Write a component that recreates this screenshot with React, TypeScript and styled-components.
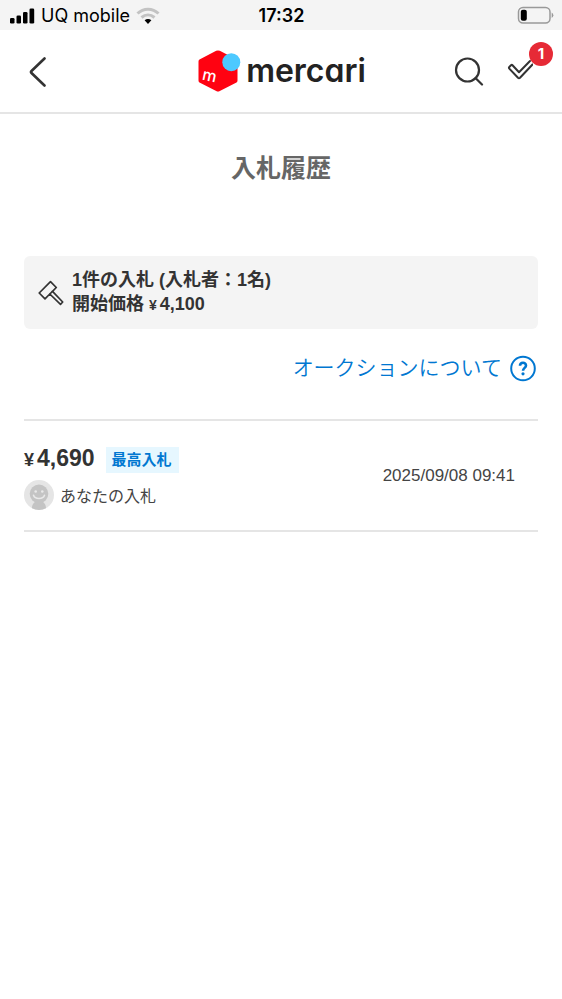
import React from "react";
import styled, { createGlobalStyle } from "styled-components";

const GlobalStyle = createGlobalStyle`
  * { box-sizing: border-box; }
  body {
    margin: 0;
    background: #fff;
    color: #333;
    font-family: "Liberation Sans", "Noto Sans CJK JP", sans-serif;
  }
  button { border: 0; padding: 0; background: none; color: inherit; cursor: pointer; }
  h1, h2, p { margin: 0; }
  svg { display: block; flex: none; }
`;

const StatusBar = styled.div`
  display: grid;
  grid-template-columns: 1fr auto 1fr;
  align-items: center;
  height: 30px;
  padding: 0 8px 0 9px;
  background: #f4f4f4;
  color: #000;
  font-family: Inter, sans-serif;
  font-size: 18px;
  line-height: 28px;
`;
const Carrier = styled.div`
  display: flex;
  align-items: center;
  gap: 6px;
  padding-top: 1px;
`;
const Clock = styled.time`
  padding-top: 2px;
  font-weight: 600;
`;
const Battery = styled.div`
  display: flex;
  justify-content: flex-end;
`;

const Header = styled.header`
  display: grid;
  grid-template-columns: 1fr auto 1fr;
  align-items: center;
  height: 84px;
  padding: 0 9px 0 11px;
  border-bottom: 2px solid #e5e5e5;
`;
const IconButton = styled.button`
  display: grid;
  place-items: center;
  width: 32px;
  height: 40px;
`;
const BackButton = styled(IconButton)`
  margin-left: 11px;
`;
const Logo = styled.a`
  display: flex;
  align-items: center;
  gap: 5px;
  color: #222;
  text-decoration: none;
`;
const Wordmark = styled.span`
  font: 600 32px/40px Inter, sans-serif;
  font-feature-settings: "cv11";
`;
const Actions = styled.div`
  display: flex;
  justify-content: flex-end;
  gap: 20px;
`;
const TodoButton = styled(IconButton)`
  position: relative;
  width: 48px;
  justify-items: start;
`;
const Count = styled.span`
  position: absolute;
  top: -9px;
  right: 0;
  width: 24px;
  height: 24px;
  border-radius: 50%;
  background: #e62a36;
  color: #fff;
  font: 700 15px/24px Inter, sans-serif;
  text-align: center;
`;

const Main = styled.main`
  padding: 34px 24px;
`;
const Title = styled.h1`
  margin-bottom: 68px;
  color: #666;
  font-size: 25px;
  line-height: 40px;
  font-weight: 700;
  text-align: center;
`;
const Summary = styled.section`
  display: flex;
  align-items: center;
  gap: 8px;
  min-height: 73px;
  padding: 12px 14px;
  border-radius: 6px;
  background: #f4f4f4;
  font-size: 18px;
  line-height: 24px;
  font-weight: 700;
`;
const Yen = styled.span<{ $size: number }>`
  display: inline-block;
  margin-right: 3px;
  font-size: ${(p) => p.$size}px;
`;
const HelpLink = styled.a`
  display: flex;
  align-items: center;
  justify-content: flex-end;
  gap: 8px;
  margin: 24px 1px 36px 0;
  color: #0077d1;
  font-size: 21px;
  line-height: 30px;
  font-weight: 350;
  text-decoration: none;
`;
const BidList = styled.ul`
  margin: 0;
  padding: 0;
  list-style: none;
  border-top: 2px solid #e5e5e5;
`;
const BidRow = styled.li`
  display: flex;
  align-items: center;
  justify-content: space-between;
  height: 111px;
  padding-right: 23px;
  border-bottom: 2px solid #e5e5e5;
`;
const Bid = styled.div`
  display: grid;
  gap: 7px;
  padding-top: 9px;
`;
const Line = styled.div`
  display: flex;
  align-items: flex-start;
`;
const Price = styled.strong`
  margin-right: 11px;
  font-size: 23px;
  line-height: 22px;
`;
const Tag = styled.span`
  padding: 0 7px 0 6px;
  background: #e6f7ff;
  color: #0077d1;
  font-size: 15px;
  line-height: 26px;
  font-weight: 700;
`;
const Bidder = styled.span`
  margin-left: 6px;
  color: #444;
  font-size: 16px;
  line-height: 34px;
`;
const BidTime = styled.time`
  color: #444;
  font-size: 17px;
  line-height: 24px;
`;

const SignalIcon = () => (
  <svg width="26" height="18" viewBox="0 0 26 18" aria-hidden="true">
    <rect x="1" y="11" width="4.500" height="5.500" rx="1.300" />
    <rect x="7.500" y="8.500" width="4.500" height="8" rx="1.300" />
    <rect x="14" y="5" width="4.500" height="11.500" rx="1.300" />
    <rect x="20.500" y="1.500" width="4.700" height="15" rx="1.300" />
  </svg>
);

const WifiIcon = () => (
  <svg width="24" height="18" viewBox="0 0 24 18" fill="none" aria-hidden="true">
    <g stroke="#c3c3c3" strokeWidth="3">
      <path d="M1.500 6.500C7.500 .8 16.500 .8 22.500 6.500" />
      <path d="M5.500 10.500C9.500 7 14.500 7 18.500 10.500" />
    </g>
    <path d="M8.600 13.300C10.600 11.500 13.400 11.500 15.400 13.300L12 17Z" fill="#000" />
  </svg>
);

const BatteryIcon = () => (
  <svg width="37" height="18" viewBox="0 0 37 18" fill="none" aria-hidden="true">
    <rect x="1.500" y="1.500" width="31.500" height="15.500" rx="4.500" stroke="#999" strokeWidth="1.500" />
    <rect x="3.800" y="3.700" width="6" height="11" rx="2" fill="#000" />
    <path d="M34.700 6.500Q38 9.200 34.700 12Z" fill="#999" />
  </svg>
);

const LogoMark = () => (
  <svg width="43" height="42" viewBox="0 0 43 42" aria-hidden="true">
    <path d="M18.200 .8Q20 0 21.800 .8L38.500 9.500Q39.500 10 39.500 11.500V30.500Q39.500 32 38.500 32.500L21.800 41Q20 42 18.200 41L1.500 32.500Q.5 32 .5 30.500V11.500Q.5 10 1.500 9.500Z" fill="#ff0211" />
    <circle cx="33.300" cy="12.200" r="9" fill="#4dc9ff" />
    <text x="3.500" y="29.500" fill="#fff" fontFamily="Inter, sans-serif" fontSize="16" fontWeight="500" transform="rotate(12 3.500 29.500)">m</text>
  </svg>
);

const BackIcon = () => (
  <svg width="20" height="32" viewBox="0 0 20 32" fill="none" stroke="#333" strokeWidth="2.600" strokeLinecap="round" strokeLinejoin="round" aria-hidden="true">
    <path d="M16.500 3.500L3.500 16Q2.500 17 3.500 18L16.500 30.500" />
  </svg>
);

const SearchIcon = () => (
  <svg width="30" height="30" viewBox="0 0 30 30" fill="none" stroke="#333" strokeWidth="2.200" strokeLinecap="round" aria-hidden="true">
    <circle cx="13.500" cy="14" r="11.500" />
    <path d="M21.500 22L28 28.500" />
  </svg>
);

const TodoIcon = () => (
  <svg width="28" height="24" viewBox="0 0 28 24" fill="none" stroke="#333" strokeWidth="2" strokeLinecap="round" strokeLinejoin="round" aria-hidden="true">
    <path d="M25 2L14 13.200L7.500 6.200Q6.800 5.500 6 6.300L4.300 8Q3.500 8.800 4.300 9.600L13 18.700Q14 19.700 15 18.700L27.500 5.500" />
  </svg>
);

const HammerIcon = () => (
  <svg width="26" height="26" viewBox="0 0 26 26" fill="none" stroke="#333" strokeWidth="1.700" strokeLinejoin="round" aria-hidden="true">
    <path d="M1.200 13L12.500 1.700L18.300 7.500L14.500 11.300L24.700 22L22.500 24.300L11.800 14L7 18.800Z" />
    <path d="M11.800 14L14.500 11.300" />
  </svg>
);

const HelpIcon = () => (
  <svg width="27" height="27" viewBox="0 0 27 27" fill="none" stroke="#0077d1" aria-hidden="true">
    <circle cx="13" cy="13.500" r="11.800" strokeWidth="2" />
    <path d="M10 10.800C10 6.800 16 6.800 16 10.500C16 12.900 13 12.900 13 15.800" strokeWidth="2.600" />
    <circle cx="13" cy="18.800" r="1.600" fill="#0077d1" stroke="none" />
  </svg>
);

const AvatarIcon = () => (
  <svg width="30" height="30" viewBox="0 0 30 30" aria-hidden="true">
    <circle cx="15" cy="15" r="15" fill="#e5e5e5" />
    <path d="M8 28.300C8 24 10 23 11.500 21.500H18.500C20 23 22 24 22 28.300Q15 31.500 8 28.300Z" fill="#c4c4c4" />
    <circle cx="15" cy="13.800" r="9.300" fill="#c4c4c4" />
    <circle cx="11.700" cy="11.500" r="1.300" fill="#e9e9e9" />
    <circle cx="18.300" cy="11.500" r="1.300" fill="#e9e9e9" />
    <path d="M9.500 15.200C11 19.500 19 19.500 20.500 15.200" fill="none" stroke="#e9e9e9" strokeWidth="1.600" strokeLinecap="round" />
  </svg>
);

const bids = [{ price: "4,690", tag: "最高入札", bidder: "あなたの入札", time: "2025/09/08 09:41" }];

export default function App() {
  return (
    <>
      <GlobalStyle />
      <StatusBar>
        <Carrier>
          <SignalIcon />
          <span>UQ mobile</span>
          <WifiIcon />
        </Carrier>
        <Clock>17:32</Clock>
        <Battery><BatteryIcon /></Battery>
      </StatusBar>
      <Header>
        <BackButton aria-label="戻る"><BackIcon /></BackButton>
        <Logo href="#">
          <LogoMark />
          <Wordmark>mercari</Wordmark>
        </Logo>
        <Actions>
          <IconButton aria-label="検索"><SearchIcon /></IconButton>
          <TodoButton aria-label="やることリスト">
            <TodoIcon />
            <Count>1</Count>
          </TodoButton>
        </Actions>
      </Header>
      <Main>
        <Title>入札履歴</Title>
        <Summary>
          <HammerIcon />
          <div>
            <p>1件の入札 (入札者：1名)</p>
            <p>開始価格 <Yen $size={14}>¥</Yen>4,100</p>
          </div>
        </Summary>
        <HelpLink href="#">
          オークションについて
          <HelpIcon />
        </HelpLink>
        <BidList>
          {bids.map((bid) => (
            <BidRow key={bid.time}>
              <Bid>
                <Line>
                  <Price><Yen $size={18}>¥</Yen>{bid.price}</Price>
                  <Tag>{bid.tag}</Tag>
                </Line>
                <Line>
                  <AvatarIcon />
                  <Bidder>{bid.bidder}</Bidder>
                </Line>
              </Bid>
              <BidTime>{bid.time}</BidTime>
            </BidRow>
          ))}
        </BidList>
      </Main>
    </>
  );
}
